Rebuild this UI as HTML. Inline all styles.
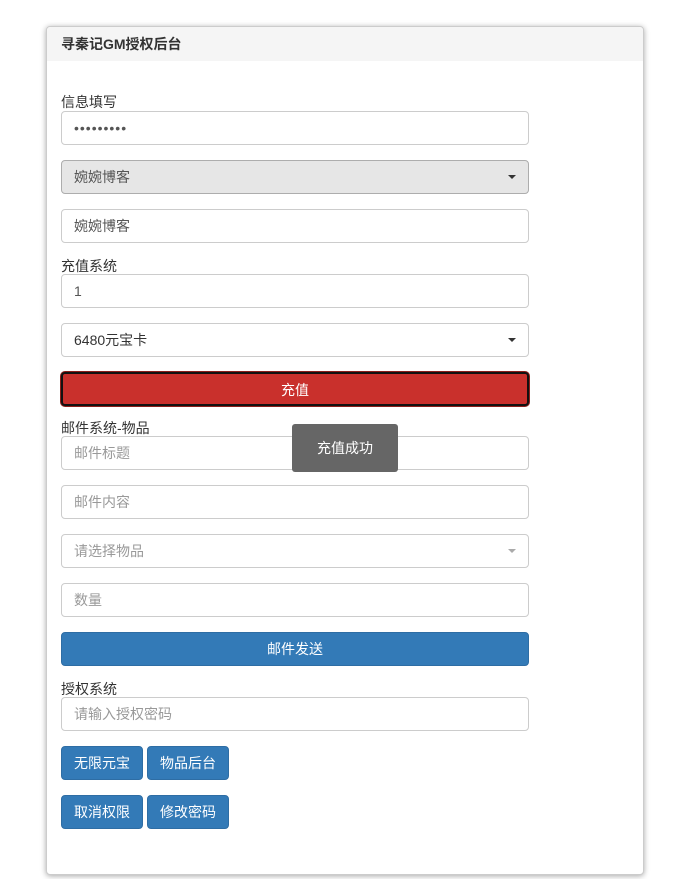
<!DOCTYPE html>
<html><head><meta charset="utf-8"><style>
*{box-sizing:border-box;margin:0;padding:0}
body{width:676px;height:879px;background:#fff;font-family:"Liberation Sans","Noto Sans CJK SC",sans-serif;font-size:14px;color:#333;position:relative;overflow:hidden}
.panel{position:absolute;left:46px;top:26px;width:598px;height:849px;border:1px solid #ccc;border-radius:4px;box-shadow:0 1px 6px rgba(0,0,0,.35);background:#fff}
.hd{position:absolute;left:0;top:0;right:0;height:34px;background:#f5f5f5;border-radius:4px 4px 0 0;font-weight:bold;padding:9px 14px;font-size:14px;line-height:16px}
.a{position:absolute}
.in{position:absolute;left:61px;width:468px;height:34px;border:1px solid #ccc;border-radius:4px;padding:0 12px;line-height:32px;font-size:14px;color:#555;background:#fff}
.ph{color:#999}
.sel::after{content:"";position:absolute;right:12px;top:14px;border-left:4px solid transparent;border-right:4px solid transparent;border-top:4px solid #333}
.sel.ph::after{border-top-color:#aaa}
.lb{position:absolute;left:61px;font-size:14px;line-height:16px;color:#333}
.btn{position:absolute;height:34px;border-radius:4px;color:#fff;text-align:center;line-height:32px;background:#337ab7;border:1px solid #2e6da4;font-size:14px}
</style></head><body>
<div class="panel"><div class="hd">寻秦记GM授权后台</div></div>
<div class="lb" style="top:94px">信息填写</div>
<div class="in" style="top:111px;letter-spacing:1px">•••••••••</div>
<div class="in sel" style="top:160px;background:#e6e6e6;border-color:#adadad">婉婉博客</div>
<div class="in" style="top:209px">婉婉博客</div>
<div class="lb" style="top:258px">充值系统</div>
<div class="in" style="top:274px">1</div>
<div class="in sel" style="top:323px;color:#333">6480元宝卡</div>
<div class="btn" style="left:61px;top:372px;width:468px;background:#c9302c;border:2px solid #111;box-shadow:0 0 0 1px #8b1e1a">充值</div>
<div class="lb" style="top:420px">邮件系统-物品</div>
<div class="in ph" style="top:436px">邮件标题</div>
<div class="in ph" style="top:485px">邮件内容</div>
<div class="in sel ph" style="top:534px">请选择物品</div>
<div class="in ph" style="top:583px">数量</div>
<div class="btn" style="left:61px;top:632px;width:468px">邮件发送</div>
<div class="lb" style="top:681px">授权系统</div>
<div class="in ph" style="top:697px">请输入授权密码</div>
<div class="btn" style="left:61px;top:746px;width:82px">无限元宝</div>
<div class="btn" style="left:147px;top:746px;width:82px">物品后台</div>
<div class="btn" style="left:61px;top:795px;width:82px">取消权限</div>
<div class="btn" style="left:147px;top:795px;width:82px">修改密码</div>
<div class="a" style="left:292px;top:424px;width:106px;height:48px;background:#666;border-radius:3px;color:#fff;text-align:center;line-height:48px">充值成功</div>
</body></html>
